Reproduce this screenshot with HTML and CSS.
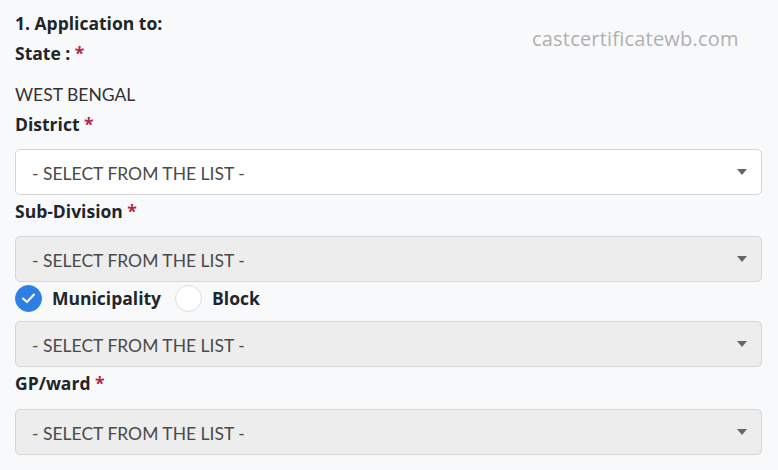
FILE: index.html
```html
<!DOCTYPE html>
<html>
<head>
<meta charset="utf-8">
<link rel="stylesheet" href="styles.css">
</head>
<body>
<div class="form">
  <div class="watermark">castcertificatewb.com</div>
  <div class="heading">1. Application to:</div>
  <div class="label">State : <span class="req">*</span></div>
  <div class="value">WEST BENGAL</div>
  <div class="label">District <span class="req">*</span></div>
  <div class="select white">- SELECT FROM THE LIST -<span class="caret"></span></div>
  <div class="label">Sub-Division <span class="req">*</span></div>
  <div class="select">- SELECT FROM THE LIST -<span class="caret"></span></div>
  <div class="radios">
    <span class="radio checked"><svg width="15" height="12" viewBox="0 0 15 12"><path d="M2 6.5 L6 10 L13 2.5" fill="none" stroke="#fff" stroke-width="2" stroke-linecap="round" stroke-linejoin="round"/></svg></span>
    <span class="rlabel">Municipality</span>
    <span class="radio"></span>
    <span class="rlabel">Block</span>
  </div>
  <div class="select tight">- SELECT FROM THE LIST -<span class="caret"></span></div>
  <div class="label">GP/ward <span class="req">*</span></div>
  <div class="select last">- SELECT FROM THE LIST -<span class="caret"></span></div>
</div>
</body>
</html>
```
FILE: styles.css
```css
html, body {
  margin: 0;
  padding: 0;
  background: #f8f9fa;
}
body {
  font-family: Lato, "Liberation Sans", sans-serif;
  color: #212529;
}
.form {
  position: relative;
  padding: 8px 16px 0 15px;
}
.watermark {
  position: absolute;
  left: 532px;
  top: 25px;
  font-size: 20px;
  color: #b0b0b0;
  font-family: "Open Sans", sans-serif;
  letter-spacing: 0.2px;
}
.heading, .label, .rlabel {
  font-family: "Open Sans", sans-serif;
  font-weight: 700;
  font-size: 17.5px;
}
.heading, .label {
  line-height: 30px;
}
.label {
  line-height: 28px;
}
.heading + .label {
  line-height: 30px;
}
.req {
  color: #b0284b;
}
.value {
  margin-top: 12px;
  font-size: 17.5px;
  line-height: 30px;
  color: #333;
}
.select {
  position: relative;
  margin: 11px 0 0;
  height: 46px;
  box-sizing: border-box;
  border: 1px solid #d6d6d6;
  border-radius: 5px;
  background: #ededed;
  padding: 2px 16px 0;
  font-size: 17.5px;
  line-height: 44px;
  color: #4a4a4a;
  margin-bottom: 2px;
}
.select.white {
  background: #fff;
}
.select.tight {
  margin-top: 9px;
}
.select.last {
  margin-top: 12px;
}
.caret {
  position: absolute;
  right: 14px;
  top: 19px;
  width: 0;
  height: 0;
  border-left: 5px solid transparent;
  border-right: 5px solid transparent;
  border-top: 6px solid #666;
}
.radios {
  display: flex;
  align-items: center;
  height: 28px;
  margin-top: 0;
}
.radio {
  width: 27px;
  height: 27px;
  box-sizing: border-box;
  border-radius: 50%;
  background: #fff;
  border: 1px solid #dcdcdc;
  display: flex;
  align-items: center;
  justify-content: center;
}
.radio.checked {
  background: #2f7ee6;
  border-color: #2f7ee6;
}
.rlabel {
  margin-left: 10px;
  margin-right: 14px;
}
```
